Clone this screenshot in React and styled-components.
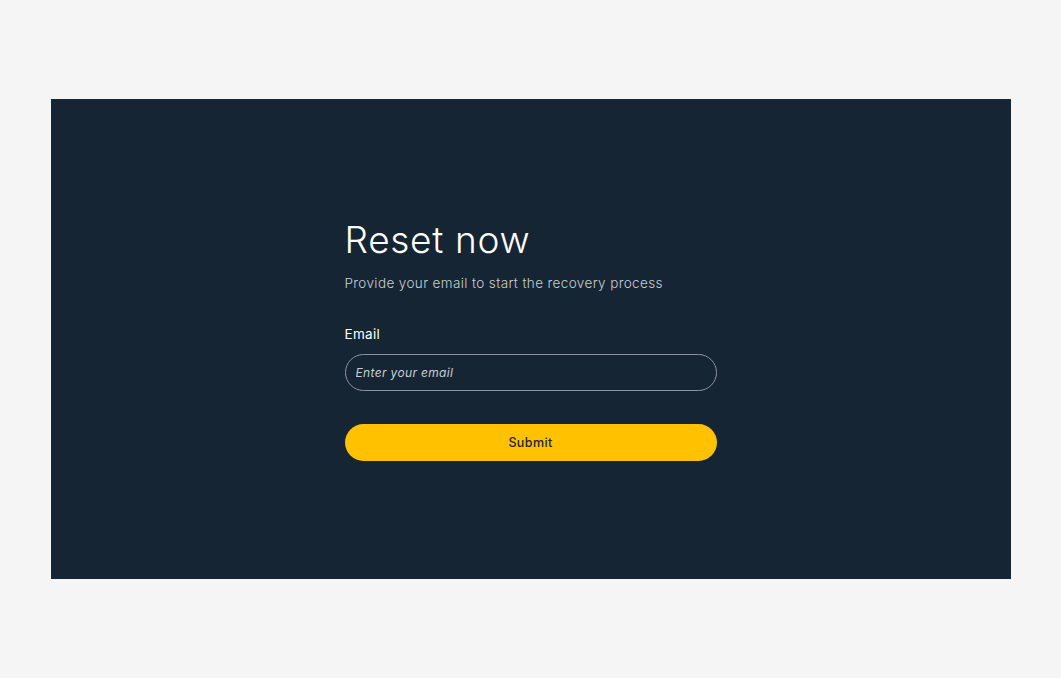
import React from "react";
import styled, { createGlobalStyle } from "styled-components";

const Global = createGlobalStyle`
  html, body { margin: 0; padding: 0; }
  body { background: #f5f5f5; font-family: "Inter", "Noto Sans", sans-serif; }
  * { box-sizing: border-box; }
`;

const Page = styled.div`
  min-height: 100vh;
  display: flex;
  align-items: center;
  justify-content: center;
`;

const Panel = styled.section`
  width: 960px;
  height: 480px;
  background: #162533;
  display: flex;
  align-items: center;
  justify-content: center;
`;

const Form = styled.form`
  width: 372px;
  display: flex;
  flex-direction: column;
  padding-top: 2px;
`;

const Title = styled.h1`
  margin: 0;
  font-weight: 300;
  font-size: 37px;
  line-height: 40px;
  color: #ffffff;
  letter-spacing: 0.7px;
`;

const Subtitle = styled.p`
  margin: 13px 0 0;
  font-size: 13.5px;
  line-height: 20px;
  color: #c9ced3;
  font-weight: 300;
  letter-spacing: 0.38px;
`;

const Label = styled.label`
  margin-top: 31px;
  font-size: 13.5px;
  line-height: 20px;
  color: #ffffff;
  font-weight: 400;
  letter-spacing: 0.3px;
`;

const Input = styled.input`
  margin-top: 10px;
  height: 37px;
  width: 100%;
  border: 1px solid #8c959e;
  border-radius: 999px;
  background: transparent;
  padding: 0 10px;
  font-family: inherit;
  font-size: 12px;
  letter-spacing: 0.35px;
  color: #fff;
  outline: none;
  &::placeholder {
    color: #c9ced3;
    font-style: italic;
  }
`;

const Button = styled.button`
  margin-top: 33px;
  height: 37px;
  width: 100%;
  border: none;
  border-radius: 999px;
  background: #ffc100;
  color: #1c2530;
  font-family: inherit;
  font-size: 12.5px;
  font-weight: 500;
  letter-spacing: 0.4px;
  cursor: pointer;
`;

export default function App() {
  return (
    <>
      <Global />
      <Page>
        <Panel>
          <Form onSubmit={(e) => e.preventDefault()}>
            <Title>Reset now</Title>
            <Subtitle>Provide your email to start the recovery process</Subtitle>
            <Label htmlFor="email">Email</Label>
            <Input id="email" type="email" placeholder="Enter your email" />
            <Button type="submit">Submit</Button>
          </Form>
        </Panel>
      </Page>
    </>
  );
}
